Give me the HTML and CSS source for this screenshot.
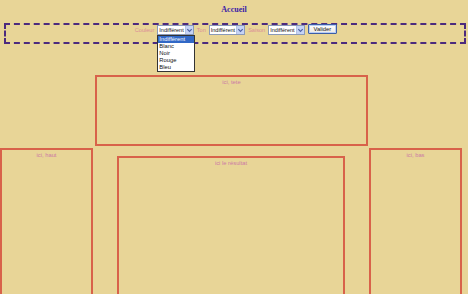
FILE: index.html
```html
<!DOCTYPE html>
<html lang="fr">
<head>
<meta charset="utf-8">
<title>Accueil</title>
<link rel="stylesheet" href="styles.css">
</head>
<body>
<h1 class="title">Accueil</h1>
<form class="filters">
  <label class="lbl">Couleur</label>
  <span class="sel sel-open">
    <span class="sel-val">Indifférent</span><span class="sel-arrow"><svg viewBox="0 0 8 8" width="7" height="7"><path d="M1.5 2.5 L4 5 L6.5 2.5" fill="none" stroke="#4d61a6" stroke-width="1.4"/></svg></span>
    <ul class="sel-list">
      <li class="on">Indifférent</li>
      <li>Blanc</li>
      <li>Noir</li>
      <li>Rouge</li>
      <li>Bleu</li>
    </ul>
  </span>
  <label class="lbl">Ton</label>
  <span class="sel">
    <span class="sel-val">Indifférent</span><span class="sel-arrow"><svg viewBox="0 0 8 8" width="7" height="7"><path d="M1.5 2.5 L4 5 L6.5 2.5" fill="none" stroke="#4d61a6" stroke-width="1.4"/></svg></span>
  </span>
  <label class="lbl">Saison</label>
  <span class="sel">
    <span class="sel-val">Indifférent</span><span class="sel-arrow"><svg viewBox="0 0 8 8" width="7" height="7"><path d="M1.5 2.5 L4 5 L6.5 2.5" fill="none" stroke="#4d61a6" stroke-width="1.4"/></svg></span>
  </span>
  <button type="button" class="btn">Valider</button>
</form>
<div class="box box-head">ici, tete</div>
<div class="cols">
  <div class="box box-side">ici, haut</div>
  <div class="box box-main">ici le résultat</div>
  <div class="box box-side">ici, bas</div>
</div>
</body>
</html>
```
FILE: styles.css
```css
html, body {
  margin: 0;
  padding: 0;
  background: #e8d597;
  overflow: hidden;
}
body {
  width: 468px;
  height: 294px;
  font-family: "Liberation Sans", Arial, sans-serif;
}
.title {
  margin: 0;
  padding-top: 5px;
  height: 18px;
  text-align: center;
  font-family: "Liberation Serif", "Times New Roman", serif;
  font-size: 8px;
  font-weight: bold;
  color: #3a20a8;
  line-height: 10px;
}
.filters {
  margin: 0 2px 0 4px;
  height: 17px;
  border: 2px dashed #4c2a7e;
  display: flex;
  align-items: flex-start;
  justify-content: center;
  gap: 3px;
  padding-left: 2px;
}
.lbl {
  font-size: 5.6px;
  line-height: 10px;
  color: #dc8d98;
}
.sel {
  position: relative;
  display: flex;
  align-items: center;
  height: 10px;
  background: #fff;
  border: 1px solid #8a9ab8;
  box-sizing: border-box;
  font-size: 5.5px;
  color: #111;
}
.sel-val {
  padding: 0 1px 0 1px;
  line-height: 8px;
}
.sel-arrow {
  width: 7px;
  height: 8px;
  background: #c5d3f5;
  border-left: 1px solid #b3c2e6;
  display: flex;
  align-items: center;
  justify-content: center;
}
.sel-list {
  position: absolute;
  top: 9px;
  left: -1px;
  width: 38px;
  margin: 0;
  padding: 0;
  list-style: none;
  background: #fff;
  border: 1px solid #333;
  box-sizing: border-box;
  z-index: 2;
}
.sel-list li {
  height: 7px;
  line-height: 7px;
  padding-left: 1px;
  font-size: 5.8px;
}
.sel-list li.on {
  background: #3168c6;
  color: #fff;
}
.btn {
  height: 10px;
  padding: 0 5px;
  margin-top: -1px;
  font-family: "Liberation Sans", Arial, sans-serif;
  font-size: 5.8px;
  line-height: 6px;
  color: #111;
  background: linear-gradient(#ffffff, #ece9e2);
  border: 1px solid #3d5ea6;
  border-radius: 1px;
  box-shadow: inset 0 0 0 1px #b9cdf5;
}
.box {
  box-sizing: border-box;
  border: 2px solid #d8624a;
  text-align: center;
  font-size: 5.8px;
  color: #cc7aa6;
  padding-top: 2px;
  line-height: 6px;
}
.box-head {
  margin: 31px 0 0 95px;
  width: 273px;
  height: 71px;
}
.cols {
  display: flex;
  gap: 24px;
  margin-top: 2px;
  align-items: flex-start;
}
.box-side {
  width: 93px;
  height: 200px;
}
.box-main {
  width: 228px;
  height: 200px;
  margin-top: 8px;
}
```
